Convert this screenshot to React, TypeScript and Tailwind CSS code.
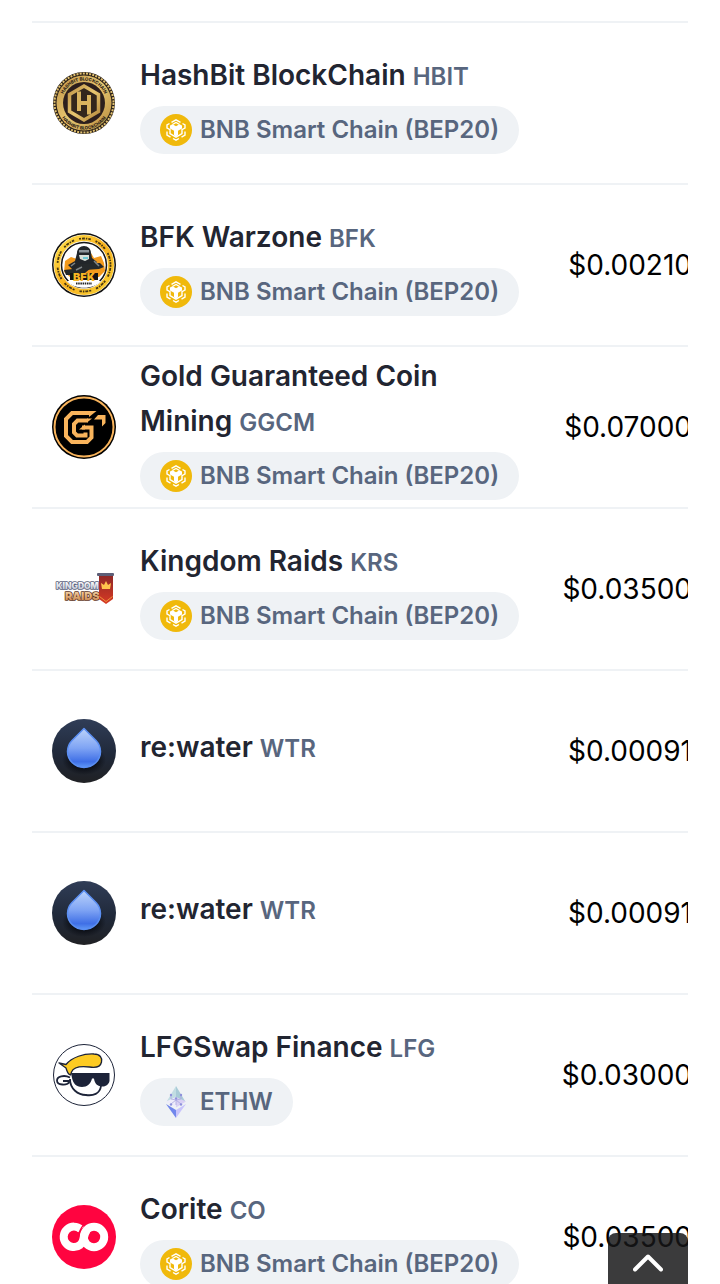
import type { ReactNode } from 'react';

type Coin = {
  name: string;
  symbol: string;
  chain?: 'bsc' | 'ethw';
  price?: string;
  logo: ReactNode;
};

const HashBitLogo = () => (
  <svg viewBox="0 0 64 64" className="size-16" aria-hidden="true">
    <defs>
      <linearGradient id="hb-gold" x1="0" y1="0" x2="1" y2="1">
        <stop offset="0" stopColor="#c09548" />
        <stop offset="0.5" stopColor="#e8c670" />
        <stop offset="1" stopColor="#b5883c" />
      </linearGradient>
      <path id="hb-top" d="M9.500 32a22.500 22.500 0 0 1 45 0" />
      <path id="hb-bottom" d="M5.500 32a26.500 26.500 0 0 0 53 0" />
    </defs>
    <circle cx="32" cy="32" r="31" fill="#2b2119" />
    <circle cx="32" cy="32" r="29.500" fill="none" stroke="#e0c070" strokeWidth="2" strokeDasharray="2 1.200" />
    <circle cx="32" cy="32" r="27.500" fill="url(#hb-gold)" />
    <g fontFamily="Inter, sans-serif" fontSize="4.500" fontWeight="800" fill="#2f2317" textAnchor="middle">
      <text><textPath href="#hb-top" startOffset="50%">HASHBIT BLOCKCHAIN</textPath></text>
      <text><textPath href="#hb-bottom" startOffset="50%">HASHBIT BLOCKCHAIN</textPath></text>
    </g>
    <circle cx="32" cy="32" r="21" fill="#2d1f1d" />
    <path d="M32 15l14.500 8.500v17L32 49l-14.500-8.500v-17z" fill="#33261c" stroke="url(#hb-gold)" strokeWidth="3.500" />
    <path d="M27 20.500V40M37 24v19.500M27 32h10" fill="none" stroke="#d9b35e" strokeWidth="4" />
  </svg>
);

const BfkLogo = () => (
  <svg viewBox="0 0 64 64" className="size-16" aria-hidden="true">
    <defs>
      <linearGradient id="bfk-ring" x1="0" y1="0" x2="1" y2="1">
        <stop offset="0" stopColor="#ffe04a" />
        <stop offset="0.5" stopColor="#f9b21f" />
        <stop offset="1" stopColor="#f8cf35" />
      </linearGradient>
    </defs>
    <circle cx="32" cy="32" r="32" fill="#101010" />
    <circle cx="32" cy="32" r="30.500" fill="#fff" />
    <circle cx="32" cy="32" r="27" fill="none" stroke="url(#bfk-ring)" strokeWidth="6" />
    <circle cx="32" cy="32" r="26.500" fill="none" stroke="#4a3810" strokeWidth="1.800" strokeDasharray="2 1 3 1 1.500 1 2.500 5" />
    <circle cx="32" cy="32" r="22.500" fill="#fff" stroke="#161616" strokeWidth="1.500" />
    <path d="M12 39l1-11 6-4 6 2 1-5 13-1 3 5 7-2 3 7 1 8-6 6H18z" fill="#f39a1c" />
    <path d="M25 20c0-4 3-7 7-7s7 3 7 7l1 5 5 4-5 5-7 6-8 1-5-5-4-4 7-4z" fill="#22262a" />
    <path d="M27 17h10v2.500H27z" fill="#8b949a" />
    <path d="M27 22h10v4l-4 2-5-2z" fill="#d8dfd8" />
    <path d="M31 24h5v2h-5z" fill="#6cc8d4" />
    <path d="M12 37l9-1 8-5 19-1 4 4-5 2-14 1-5 5H14z" fill="#25292b" />
    <path d="M19 33l4-3M42 28l5 5M24 37l6-3" stroke="#7e8587" strokeWidth="1.500" />
    <path d="M18 40h28v7H18z" fill="#141414" />
    <path d="M15 48h34c-7 9-27 9-34 0z" fill="#fff" />
    <text x="32" y="48" textAnchor="middle" fontFamily="Inter, sans-serif" fontSize="11" fontWeight="900" fill="#f7b624">BFK</text>
    <path d="M24 50.500h16" stroke="#222" strokeWidth="2" strokeDasharray="1.500 0.700" />
  </svg>
);

const GgcmLogo = () => (
  <svg viewBox="0 0 64 64" className="size-16" aria-hidden="true">
    <circle cx="32" cy="32" r="32" fill="#000" />
    <circle cx="32" cy="32" r="29.500" fill="none" stroke="#f9b45c" strokeWidth="2" />
    <g fill="none" stroke="#f9b45c" strokeWidth="4">
      <path d="M38 18H20l-6 6v17l6 6h15l4.500-4.500V32.500H30" />
      <path d="M36 25.500H25.500L22 29v8.500l3 3h8.500v-3" />
    </g>
    <path d="M37 16h7.500L37 22z" fill="#f9b45c" />
    <path d="M35 23.500h5l-5 4z" fill="#f9b45c" />
    <path d="M27 34.500l6-5v5z" fill="#f9b45c" />
    <path d="M42 24.500l4-4.500h7.500v8L50 31.500v-7z" fill="#f9b45c" />
  </svg>
);

const KingdomRaidsLogo = () => (
  <svg viewBox="0 0 64 64" className="size-16" aria-hidden="true">
    <defs>
      <linearGradient id="kr-flag" x1="0" y1="0" x2="0" y2="1">
        <stop offset="0" stopColor="#8e2726" />
        <stop offset="1" stopColor="#d83a24" />
      </linearGradient>
      <linearGradient id="kr-silver" x1="0" y1="0" x2="0" y2="1">
        <stop offset="0" stopColor="#ffffff" />
        <stop offset="1" stopColor="#b9bfcd" />
      </linearGradient>
      <linearGradient id="kr-gold" x1="0" y1="0" x2="0" y2="1">
        <stop offset="0" stopColor="#fbe0b5" />
        <stop offset="1" stopColor="#c47b42" />
      </linearGradient>
    </defs>
    <g fontFamily="Inter, sans-serif" fontWeight="900" paintOrder="stroke" strokeLinejoin="round">
      <text x="4" y="32" fontSize="8.500" fill="url(#kr-silver)" stroke="#59607a" strokeWidth="1.500">KINGDOM</text>
      <text x="13" y="43" fontSize="11" fill="url(#kr-gold)" stroke="#5f3523" strokeWidth="1.500">RAIDS</text>
    </g>
    <path d="M47 18h14v24l-7 5-7-5z" fill="url(#kr-flag)" />
    <path d="M47.500 39.500l6.500 5 6.500-5" fill="none" stroke="#f0913d" />
    <rect x="45" y="16" width="17" height="3" rx="1" fill="#5d5e77" />
    <path d="M49 26l3 2 2-4 2 4 3-2-1 6h-8z" fill="#ffc44d" />
  </svg>
);

const WaterLogo = () => (
  <svg viewBox="0 0 64 64" className="size-16" aria-hidden="true">
    <defs>
      <linearGradient id="wtr-bg" x1="0" y1="0" x2="0" y2="1">
        <stop offset="0" stopColor="#303d57" />
        <stop offset="0.550" stopColor="#20293a" />
        <stop offset="1" stopColor="#202124" />
      </linearGradient>
      <linearGradient id="wtr-drop" x1="0" y1="0" x2="0" y2="1">
        <stop offset="0" stopColor="#bcd3fa" />
        <stop offset="0.500" stopColor="#7fa4f4" />
        <stop offset="0.850" stopColor="#3f6fe6" />
        <stop offset="1" stopColor="#5f98f6" />
      </linearGradient>
      <radialGradient id="wtr-shadow">
        <stop offset="0.500" stopColor="#0a0d14" />
        <stop offset="1" stopColor="#0a0d14" stopOpacity="0" />
      </radialGradient>
    </defs>
    <circle cx="32" cy="32" r="32" fill="url(#wtr-bg)" />
    <ellipse cx="32" cy="41" rx="22" ry="15" fill="url(#wtr-shadow)" />
    <path d="M32 9.500L20 21.500A16.300 16.300 0 0 0 15.500 32.500a16.500 16 0 0 0 33 0A16.300 16.300 0 0 0 44 21.500z" fill="url(#wtr-drop)" stroke="#5b8ff3" strokeWidth="1.500" strokeLinejoin="round" />
  </svg>
);

const LfgLogo = () => (
  <svg viewBox="0 0 64 64" className="size-16" aria-hidden="true">
    <circle cx="32" cy="32" r="30.500" fill="#fff" stroke="#1c2338" strokeWidth="1" />
    <g fill="none" stroke="#1c2338" strokeWidth="1.800">
      <path d="M18 36c0 10 8 16 16 16 7 1 14-1 15-9" />
      <path d="M18 34.500c-6-3-13-1-13 3 0 5 10 5 12 2v-1.500h-6" />
    </g>
    <path d="M7 20l7 1.500C20 14 32 10.500 42 11c6 0 8.500 4 7.500 8-1 5-6 6-12 5-8-1-16 0-18 5l-1 3c-3-1-3.500-4-4.500-7z" fill="#fdcb23" stroke="#1c2338" strokeWidth="1.300" strokeLinejoin="round" />
    <path d="M19 30h38.500v8c-1 4-4 5.500-7 5.500-5 0-8-3-8.500-8h-2c-1 5-5 8.500-10 8.500-6 0-9-4-10-9z" fill="#1c2338" />
  </svg>
);

const CoriteLogo = () => (
  <svg viewBox="0 0 64 64" className="size-16" aria-hidden="true">
    <circle cx="32" cy="32" r="32" fill="#ff0440" />
    <g fill="none" stroke="#fff" strokeWidth="8">
      <path d="M29 24.500a10.200 10.200 0 1 0-1 15.500c5-4 3-10 7-15" />
      <circle cx="42" cy="32" r="10.200" />
    </g>
    <path d="M33.500 18.500c-3.500 2.500-5 5.500-6 9" fill="none" stroke="#ff0440" strokeWidth="1.500" />
  </svg>
);

const BscIcon = () => (
  <svg viewBox="0 0 32 32" className="size-8 shrink-0" aria-hidden="true">
    <circle cx="16" cy="16" r="16" fill="#f0b90b" />
    <g fill="none" stroke="#fff" strokeWidth="1.400">
      <path d="M11.500 8.400L16 5.800l4.500 2.600M22.500 9.500l2.500 1.400v3.600M25 17.500v3.600l-3.500 2M19 24.500l-3 1.700-3-1.700M10.500 23.100l-3.500-2v-3.600M7 14.500v-3.600l2.500-1.400" />
      <path d="M7 14l3 1.700v4l6 3.500 6-3.500v-4l3-1.700M12.500 10.500L16 8.500l3.500 2" />
    </g>
    <path d="M10 11.500l2.500-1.300 3.500 2 3.500-2 2.500 1.300v3l-4 2.300v4.500l-2 1.200-2-1.200v-4.500l-4-2.300z" fill="#fff" />
  </svg>
);

const EthwIcon = () => (
  <svg viewBox="0 0 32 32" className="size-8 shrink-0" aria-hidden="true">
    <path d="M16 0l9 15-9 5z" fill="#a9cbd7" />
    <path d="M16 0v20l-9-5z" fill="#c2dde3" />
    <path d="M16 11l10 4.500-10 6z" fill="#d9d0f4" />
    <path d="M16 11v10.500L6 15.500z" fill="#eeecfa" />
    <path d="M6 18l10 6v8z" fill="#7187ec" />
    <path d="M26 18l-10 6v8z" fill="#c8c4fb" />
    <path d="M11 9v4l5 1 5-1V9M16 14v5M11 18l5-4 5 4" fill="none" stroke="#a9a8df" strokeWidth="0.800" />
    <g fill="#8f91dc">
      <circle cx="11" cy="9" r="1.200" />
      <circle cx="21" cy="9" r="1.200" />
      <circle cx="16" cy="12.500" r="1.200" />
      <circle cx="11" cy="18.500" r="1.200" />
      <circle cx="21" cy="18.500" r="1.200" />
    </g>
  </svg>
);

const CHAINS = {
  bsc: { label: 'BNB Smart Chain (BEP20)', icon: <BscIcon /> },
  ethw: { label: 'ETHW', icon: <EthwIcon /> },
};

const COINS: Coin[] = [
  { name: 'HashBit BlockChain', symbol: 'HBIT', chain: 'bsc', logo: <HashBitLogo /> },
  { name: 'BFK Warzone', symbol: 'BFK', chain: 'bsc', price: '$0.00210', logo: <BfkLogo /> },
  { name: 'Gold Guaranteed Coin Mining', symbol: 'GGCM', chain: 'bsc', price: '$0.07000', logo: <GgcmLogo /> },
  { name: 'Kingdom Raids', symbol: 'KRS', chain: 'bsc', price: '$0.03500', logo: <KingdomRaidsLogo /> },
  { name: 're:water', symbol: 'WTR', price: '$0.00091', logo: <WaterLogo /> },
  { name: 're:water', symbol: 'WTR', price: '$0.00091', logo: <WaterLogo /> },
  { name: 'LFGSwap Finance', symbol: 'LFG', chain: 'ethw', price: '$0.03000', logo: <LfgLogo /> },
  { name: 'Corite', symbol: 'CO', chain: 'bsc', price: '$0.03500', logo: <CoriteLogo /> },
];

const CoinRow = ({ coin }: { coin: Coin }) => {
  const chain = coin.chain && CHAINS[coin.chain];

  return (
    <tr className="h-[162px] border-b-2 border-[#eff2f5]">
      <td className="w-[108px] pl-5">{coin.logo}</td>
      <th scope="row" className="w-[380px] text-left font-semibold">
        <a href="#coin" className="mb-2 block text-[28px] leading-[45px] text-[#222531]">
          {coin.name} <span className="text-2xl leading-none text-[#58667e]">{coin.symbol}</span>
        </a>
        {chain && (
          <span className="flex h-12 w-fit items-center gap-2 rounded-full bg-[#eff2f5] px-5 text-2xl whitespace-nowrap text-[#58667e]">
            {chain.icon}
            {chain.label}
          </span>
        )}
      </th>
      <td className="text-right text-[28px] text-black">{coin.price}</td>
    </tr>
  );
};

export default function App() {
  return (
    <div className="bg-white px-8 pt-[21px] font-['Inter',sans-serif]">
      {/* Coin list, price column runs past the edge on small screens */}
      <main className="overflow-hidden">
        <table className="w-[calc(100%+4px)] min-w-[660px] table-fixed border-collapse border-t-2 border-[#eff2f5]">
          <tbody>
            {COINS.map((coin, i) => (
              <CoinRow key={i} coin={coin} />
            ))}
          </tbody>
        </table>
      </main>

      {/* Back to top */}
      <button
        type="button"
        aria-label="Back to top"
        className="fixed right-8 bottom-0 flex h-[51px] w-20 items-center justify-center rounded-t-lg bg-[#151517]/84 pt-2"
        onClick={() => window.scrollTo({ top: 0, behavior: 'smooth' })}
      >
        <svg viewBox="0 0 30 18" className="h-[18px] w-[30px]" fill="none" stroke="#fff" strokeWidth="4" strokeLinecap="round" strokeLinejoin="round">
          <path d="M2 15.500L15 2.500l13 13" />
        </svg>
      </button>
    </div>
  );
}
